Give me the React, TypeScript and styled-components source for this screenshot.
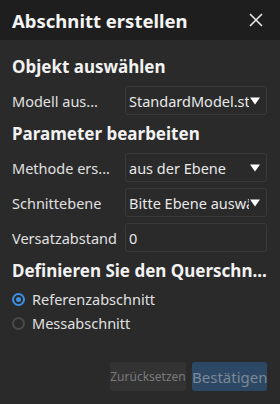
import React from 'react';
import styled, { createGlobalStyle } from 'styled-components';

const fontFamily = '"Noto Sans", "Open Sans", sans-serif';

const GlobalStyle = createGlobalStyle`
  html, body {
    margin: 0;
    padding: 0;
    background: #2a2a2a;
  }
  * {
    box-sizing: border-box;
  }
`;

const Panel = styled.div`
  width: 280px;
  height: 404px;
  display: flex;
  flex-direction: column;
  background: #2a2a2a;
  font-family: ${fontFamily};
  color: #e4e4e4;
`;

const Header = styled.div`
  height: 40px;
  flex-shrink: 0;
  display: flex;
  align-items: center;
  justify-content: space-between;
  padding: 0 17px 0 12px;
  background: #1e1e1e;
`;

const Title = styled.div`
  font-size: 18.5px;
  font-weight: 700;
  color: #f4f4f4;
`;

const Close = styled.button`
  width: 14px;
  height: 14px;
  padding: 0;
  border: none;
  background: transparent;
  display: flex;
  align-items: center;
  justify-content: center;
  cursor: pointer;
`;

const Body = styled.div`
  flex: 1;
  display: flex;
  flex-direction: column;
  padding: 16px 13px 0 12px;
`;

const Heading = styled.div<{ top?: number }>`
  font-size: 17px;
  font-weight: 700;
  color: #f2f2f2;
  margin-top: ${({ top }) => top ?? 0}px;
  margin-bottom: 8px;
  line-height: 22px;
  white-space: nowrap;
  overflow: hidden;
`;

const Row = styled.div`
  display: flex;
  align-items: center;
  height: 29px;
  margin-bottom: 6px;
`;

const Label = styled.div`
  width: 113px;
  flex-shrink: 0;
  font-size: 14.5px;
  color: #e0e0e0;
  white-space: nowrap;
  overflow: hidden;
`;

const Field = styled.div`
  flex: 1;
  height: 29px;
  display: flex;
  align-items: center;
  padding: 0 6px 0 3px;
  border: 1px solid #3a3a3a;
  border-radius: 3px;
  background: #2a2a2a;
  font-size: 14.5px;
  color: #e8e8e8;
  min-width: 0;
`;

const FieldText = styled.div`
  flex: 1;
  white-space: nowrap;
  overflow: hidden;
`;

const Arrow = styled.svg`
  flex-shrink: 0;
  margin-left: 1px;
`;

const Radios = styled.div`
  display: flex;
  flex-direction: column;
  gap: 6px;
`;

const RadioRow = styled.div`
  display: flex;
  align-items: center;
  gap: 7px;
  height: 18px;
  font-size: 14.5px;
  color: #e0e0e0;
`;

const RadioDot = styled.span<{ checked?: boolean }>`
  width: 13px;
  height: 13px;
  border-radius: 50%;
  flex-shrink: 0;
  border: 2px solid ${({ checked }) => (checked ? '#3d8fe3' : '#4a4a4a')};
  display: flex;
  align-items: center;
  justify-content: center;

  &::after {
    content: '';
    width: 5px;
    height: 5px;
    border-radius: 50%;
    background: ${({ checked }) => (checked ? '#3d8fe3' : 'transparent')};
  }
`;

const Footer = styled.div`
  margin-top: auto;
  display: flex;
  justify-content: flex-end;
  gap: 6px;
  padding: 0 13px 13px 0;
`;

const Button = styled.button<{ variant: 'reset' | 'confirm' }>`
  height: 29px;
  padding: 0;
  border: none;
  border-radius: 3px;
  font-family: ${fontFamily};
  width: ${({ variant }) => (variant === 'confirm' ? '75px' : '76px')};
  font-size: ${({ variant }) => (variant === 'confirm' ? '15px' : '12px')};
  color: ${({ variant }) => (variant === 'confirm' ? '#7b8898' : '#7a7a7a')};
  background: ${({ variant }) => (variant === 'confirm' ? '#2d4864' : '#333333')};
  white-space: nowrap;
  overflow: hidden;
`;

const DropArrow = () => (
  <Arrow width="10" height="8" viewBox="0 0 10 8">
    <path d="M0 0.5H10L5 7.5Z" fill="#ffffff" />
  </Arrow>
);

const selects = [
  { label: 'Methode ers...', value: 'aus der Ebene' },
  { label: 'Schnittebene', value: 'Bitte Ebene auswählen' },
];

export default function App() {
  return (
    <>
      <GlobalStyle />
      <Panel>
        <Header>
          <Title>Abschnitt erstellen</Title>
          <Close aria-label="Schließen">
            <svg width="14" height="14" viewBox="0 0 14 14">
              <path d="M1 1L13 13M13 1L1 13" stroke="#e8e8e8" strokeWidth="1.6" />
            </svg>
          </Close>
        </Header>
        <Body>
          <Heading>Objekt auswählen</Heading>
          <Row>
            <Label>Modell aus...</Label>
            <Field>
              <FieldText>StandardModel.stl</FieldText>
              <DropArrow />
            </Field>
          </Row>
          <Heading top={2}>Parameter bearbeiten</Heading>
          {selects.map((s) => (
            <Row key={s.label}>
              <Label>{s.label}</Label>
              <Field>
                <FieldText>{s.value}</FieldText>
                <DropArrow />
              </Field>
            </Row>
          ))}
          <Row>
            <Label>Versatzabstand</Label>
            <Field>
              <FieldText>0</FieldText>
            </Field>
          </Row>
          <Heading top={2}>Definieren Sie den Querschn...</Heading>
          <Radios>
            <RadioRow>
              <RadioDot checked />
              Referenzabschnitt
            </RadioRow>
            <RadioRow>
              <RadioDot />
              Messabschnitt
            </RadioRow>
          </Radios>
        </Body>
        <Footer>
          <Button variant="reset">Zurücksetzen</Button>
          <Button variant="confirm">Bestätigen</Button>
        </Footer>
      </Panel>
    </>
  );
}
